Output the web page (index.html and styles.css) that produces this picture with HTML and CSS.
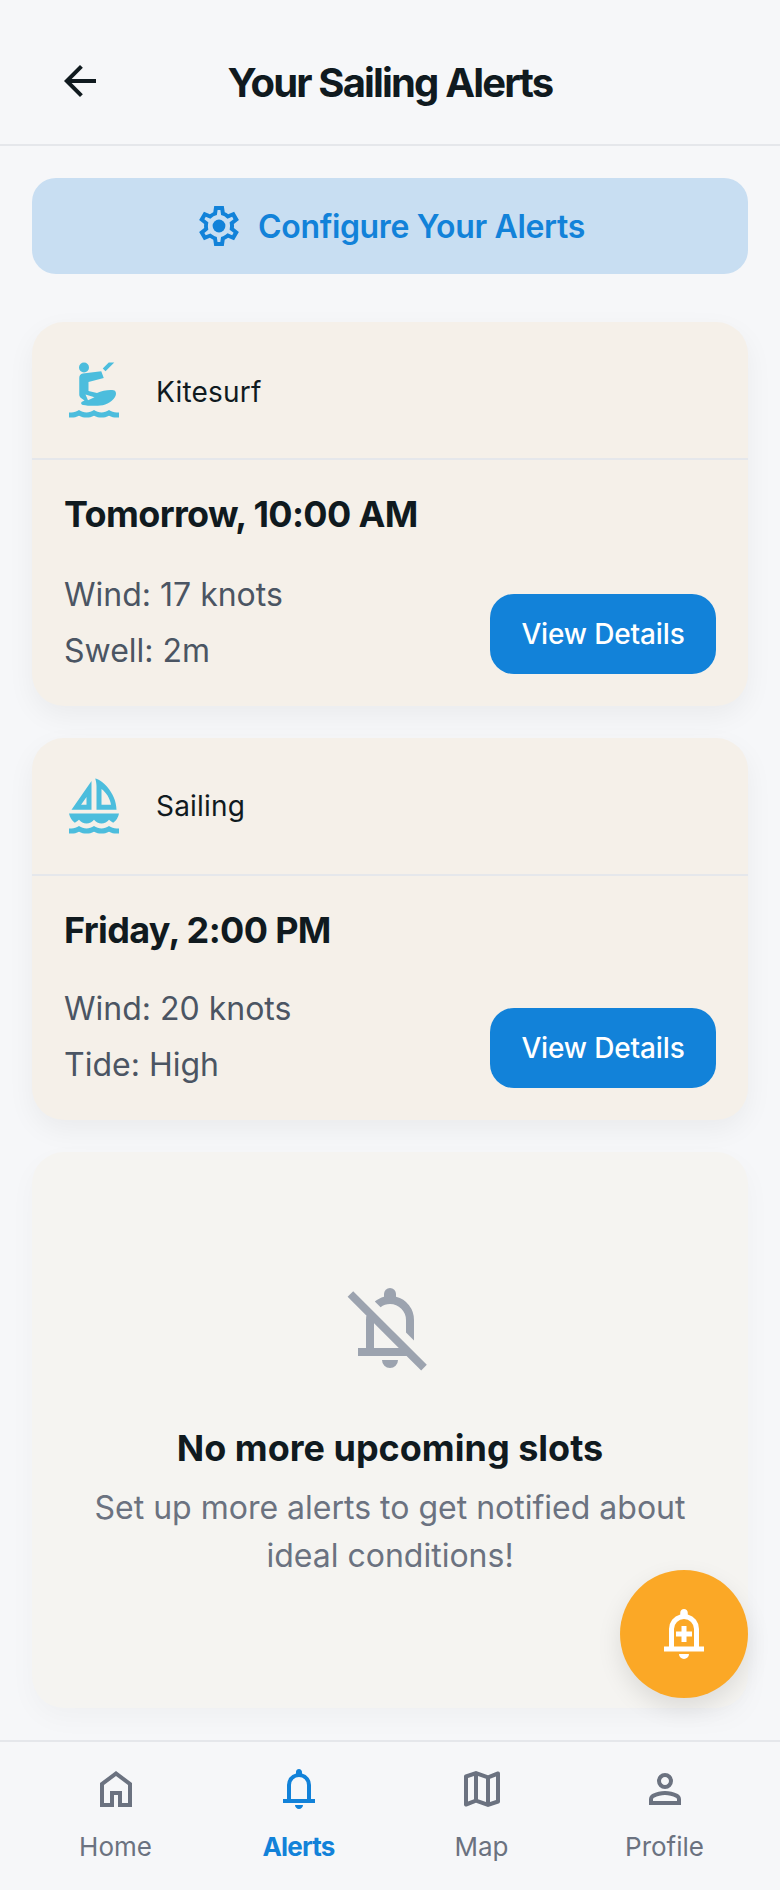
FILE: index.html
```html
<!DOCTYPE html>
<html lang="en">
<head>
<meta charset="utf-8">
<title>Your Sailing Alerts</title>
<link rel="stylesheet" href="styles.css">
</head>
<body>
<div class="app">
  <header class="topbar">
    <button class="back" aria-label="Back">
      <svg class="icon48" viewBox="0 0 24 24"><path d="m7.825 13 5.6 5.6L12 20l-8-8 8-8 1.425 1.4-5.6 5.6H20v2H7.825z"/></svg>
    </button>
    <h1 class="title">Your Sailing Alerts</h1>
    <span class="spacer"></span>
  </header>

  <main class="content">
    <a class="configure">
      <svg class="icon48" viewBox="0 0 24 24"><path fill-rule="evenodd" d="M19.43 12.98c.04-.32.07-.64.07-.98s-.03-.66-.07-.98l2.53-1.98-2.4-4.15-2.98 1.2c-.52-.4-1.08-.73-1.69-.98L14.4 2H9.6l-.46 3.11c-.61.25-1.17.59-1.69.98l-2.98-1.2-2.4 4.15 2.53 1.98c-.04.32-.07.65-.07.98s.03.66.07.98l-2.53 1.98 2.4 4.15 2.98-1.2c.52.4 1.08.73 1.69.98L9.6 22h4.8l.46-3.11c.61-.25 1.17-.59 1.69-.98l2.98 1.2 2.4-4.15-2.5-1.98zM17.45 11.27c.04.31.05.52.05.73s-.02.43-.05.73l-.14 1.13 1.97 1.54-.7 1.21-2.31-.93-.94.71c-.43.32-.84.56-1.25.73l-1.06.43-.36 2.48h-1.4l-.35-2.48-1.06-.43c-.43-.18-.83-.41-1.23-.71l-.91-.7-2.33.94-.7-1.21 1.97-1.54-.14-1.13c-.03-.31-.05-.54-.05-.74s.02-.43.05-.73l.14-1.13-1.97-1.54.7-1.21 2.31.93.94-.71c.43-.32.84-.56 1.25-.73l1.06-.43.36-2.48h1.39l.35 2.48 1.06.43c.43.18.83.41 1.23.71l.91.7 2.33-.94.7 1.21-1.96 1.55.14 1.13z"/><circle cx="12" cy="12" r="3.2"/></svg>
      <span>Configure Your Alerts</span>
    </a>

    <section class="card card-first">
      <div class="card-head">
        <svg class="icon60" viewBox="0 0 24 24"><circle cx="8" cy="3" r="2"/><path d="M17.9 1h2.2l-3.5 3.500-1.100-1.100z"/><path d="M22 23v-2h-1c-1 0-2.100-.35-3-1-1.800 1.300-4.200 1.300-6 0-1.800 1.300-4.200 1.300-6 0-.9.65-2 1-3 1H2v2h1c1 0 2-.25 3-.75 1.900 1 4.100 1 6 0 1.900 1 4.100 1 6 0 1 .5 2 .75 3 .75z"/><path fill-rule="evenodd" d="M7.500 5.400 14.900 4.500 15.900 7.200 9.800 8.800V12.400L13.200 13.200C15 12.200 17.500 11.900 19.300 12 20.800 12 21.200 13.400 20.400 14.800 19 17 16.200 18.300 13.500 18.300 11.200 18.400 9.200 18.300 7.600 18 6.600 17.800 6.700 16.900 7.400 16.600L8.200 16.200 6.800 15.200C6.300 14.800 6.100 14.300 6.100 13.800V7.200C6.100 6.200 6.600 5.500 7.500 5.400ZM8.600 13.800 12.200 14.900 9.600 16.100Z"/></svg>
        <span class="sport">Kitesurf</span>
      </div>
      <div class="card-body">
        <h2 class="when">Tomorrow, 10:00 AM</h2>
        <div class="card-row">
          <div class="facts">
            <p>Wind: 17 knots</p>
            <p>Swell: 2m</p>
          </div>
          <button class="details">View Details</button>
        </div>
      </div>
    </section>

    <section class="card">
      <div class="card-head">
        <svg class="icon60" viewBox="0 0 24 24"><path fill-rule="evenodd" d="M11 13.500V2L3 13.500h8zm-2-2H6.830L9 8.400v3.100zM21 13.500C21 6.500 14.500 1 12.500 1c0 0 .5 1.500.5 3v9.500h8zm-2.200-2H15V5.200c1.800 1.300 3.400 3.600 3.800 6.300z"/><path d="M22 15H2c.31 1.530 1.160 2.840 2.330 3.730.65-.37 1.220-.8 1.670-1.230.73.84 1.800 1.500 3 1.500s2.270-.66 3-1.500c.73.84 1.800 1.500 3 1.500s2.270-.66 3-1.500c.45.43 1.020.86 1.670 1.230A6 6 0 0 0 22 15z"/><path d="M22 23v-2h-1c-1.040 0-2.080-.35-3-1-1.830 1.300-4.170 1.300-6 0-1.830 1.300-4.170 1.300-6 0-.91.65-1.960 1-3 1H2v2h1c1.030 0 2.050-.25 3-.75 1.890 1 4.110 1 6 0 1.890 1 4.110 1 6 0 .95.5 1.970.75 3 .75z"/></svg>
        <span class="sport">Sailing</span>
      </div>
      <div class="card-body">
        <h2 class="when">Friday, 2:00 PM</h2>
        <div class="card-row">
          <div class="facts">
            <p>Wind: 20 knots</p>
            <p>Tide: High</p>
          </div>
          <button class="details">View Details</button>
        </div>
      </div>
    </section>

    <section class="empty">
      <svg class="icon96" viewBox="0 0 24 24"><path d="M4 19v-2h2v-7q0-.825.213-1.625t.637-1.525L8.350 8.350q-.175.4-.262.813T8 10v7h6.200L1.400 4.200l1.400-1.400 18.400 18.400-1.400 1.400-3.650-3.600H4zm14-3.850-2-2V10q0-1.650-1.175-2.825T12 6q-.65 0-1.250.2t-1.100.6L8.200 5.350q.5-.4 1.088-.687T10.500 4.200v-.7q0-.625.438-1.063T12 2q.625 0 1.063.438T13.500 3.500v.7q2 .5 3.250 2.113T18 10v5.150zM12 22q-.825 0-1.413-.587T10 20h4q0 .825-.587 1.413T12 22z"/></svg>
      <h2 class="empty-title">No more upcoming slots</h2>
      <p class="empty-text">Set up more alerts to get notified about ideal conditions!</p>
    </section>
  </main>

  <button class="fab" aria-label="Add alert">
    <svg class="icon60" viewBox="0 0 24 24"><path fill-rule="evenodd" d="M4 19v-2h2v-7q0-2.075 1.250-3.688T10.500 4.200v-.7q0-.625.438-1.063T12 2q.625 0 1.063.438T13.500 3.500v.7q2 .5 3.250 2.113T18 10v7h2v2H4zm4-2h8v-7q0-1.650-1.175-2.825T12 6 9.175 7.175 8 10v7zM12 22q-.825 0-1.413-.588T10 20h4q0 .825-.588 1.413T12 22z"/><path d="M11 8.800h2V11h2.200v2H13v2.200h-2V13H8.800v-2H11z"/></svg>
  </button>

  <nav class="tabs">
    <a class="tab">
      <svg class="icon48" viewBox="0 0 24 24"><path d="M6 19h3v-6h6v6h3v-9l-6-4.500L6 10v9zm-2 2V9l8-6 8 6v12h-7v-6h-2v6H4z"/></svg>
      <span>Home</span>
    </a>
    <a class="tab tab-active">
      <svg class="icon48" viewBox="0 0 24 24"><path fill-rule="evenodd" d="M4 19v-2h2v-7q0-2.075 1.250-3.688T10.500 4.200v-.7q0-.625.438-1.063T12 2q.625 0 1.063.438T13.500 3.500v.7q2 .5 3.250 2.113T18 10v7h2v2H4zm4-2h8v-7q0-1.650-1.175-2.825T12 6 9.175 7.175 8 10v7zM12 22q-.825 0-1.413-.588T10 20h4q0 .825-.588 1.413T12 22z"/></svg>
      <span>Alerts</span>
    </a>
    <a class="tab">
      <svg class="icon48" viewBox="0 0 24 24"><path fill-rule="evenodd" d="m15 21-6-2.100-4.650 1.800q-.5.2-.925-.113T3 19.750v-14q0-.325.188-.575T3.700 4.800L9 3l6 2.100 4.650-1.800q.5-.2.925.113T21 4.250v14q0 .325-.188.575T20.300 19.200L15 21zm-1-2.450V6.850l-4-1.400v11.700l4 1.400zm2 0 3-1V5.700l-3 1.150v11.700zM5 18.300l3-1.150V5.450l-3 1V18.300z"/></svg>
      <span>Map</span>
    </a>
    <a class="tab">
      <svg class="icon48" viewBox="0 0 24 24"><path fill-rule="evenodd" d="M12 12q-1.650 0-2.825-1.175T8 8t1.175-2.825T12 4t2.825 1.175T16 8t-1.175 2.825T12 12zm-8 8v-2.800q0-.85.438-1.562T5.600 14.550q1.550-.775 3.150-1.163T12 13t3.250.387 3.150 1.163q.725.375 1.163 1.088T20 17.200V20H4zm2-2h12v-.8q0-.275-.138-.5t-.362-.35q-1.350-.675-2.725-1.012T12 15t-2.775.338-2.725 1.012q-.225.125-.362.35T6 17.200v.8zm6-8q.825 0 1.413-.588T14 8t-.588-1.413T12 6t-1.412.587T10 8t.588 1.413T12 10z"/></svg>
      <span>Profile</span>
    </a>
  </nav>
</div>
</body>
</html>
```
FILE: styles.css
```css
* { box-sizing: border-box; }
html, body { margin: 0; padding: 0; }
body {
  width: 780px;
  height: 1890px;
  background: #f6f7f9;
  color: #101a1f;
  font-family: "Inter", "Noto Sans", sans-serif;
}
h1, h2, p { margin: 0; }
button { border: 0; padding: 0; font: inherit; }
svg { display: block; fill: currentColor; flex: none; }
.icon48 { width: 48px; height: 48px; }
.icon60 { width: 60px; height: 60px; }
.icon96 { width: 96px; height: 96px; }

.app {
  position: relative;
  display: flex;
  flex-direction: column;
  height: 1890px;
}

.topbar {
  display: grid;
  grid-template-columns: 1fr auto 1fr;
  align-items: center;
  height: 146px;
  padding: 55px 56px 41px;
  border-bottom: 2px solid #e5e7eb;
}
.back { background: none; color: #101a1f; width: 48px; height: 48px; }
.title {
  font-size: 40px;
  line-height: 48px;
  font-weight: 700;
  letter-spacing: -1.85px;
  margin-top: 4px;
}

.content {
  flex: 1;
  display: flex;
  flex-direction: column;
  padding: 32px;
}
.configure {
  display: flex;
  align-items: center;
  justify-content: center;
  gap: 15px;
  height: 96px;
  border-radius: 24px;
  background: #c8def2;
  color: #1282d9;
  font-size: 32px;
  font-weight: 600;
  letter-spacing: -0.35px;
  margin-bottom: 48px;
}

.card {
  background: #f5f0e9;
  border-radius: 32px;
  box-shadow: 0 10px 28px rgba(0, 0, 0, 0.05);
  margin-bottom: 32px;
}
.card-head {
  display: flex;
  align-items: center;
  gap: 32px;
  height: 138px;
  padding: 0 32px;
  border-bottom: 2px solid #e5e7eb;
  color: #4cbddd;
}
.sport { color: #101a1f; font-size: 28px; letter-spacing: 0.2px; }
.card-first .sport { margin-top: 3px; }
.card-body { padding: 32px 32px 31px; }
.when {
  font-size: 36px;
  line-height: 44px;
  font-weight: 700;
  letter-spacing: -0.65px;
  margin-bottom: 33px;
}
.card-first .when { margin-bottom: 34.6px; }
.card-row {
  display: flex;
  justify-content: space-between;
  align-items: flex-end;
}
.facts {
  display: flex;
  flex-direction: column;
  gap: 8px;
  color: #4b5563;
  font-size: 32px;
  line-height: 48px;
}
.details {
  width: 226px;
  height: 80px;
  margin-bottom: 1px;
  border-radius: 24px;
  background: #1282d9;
  color: #fff;
  font-size: 28px;
  font-weight: 500;
  letter-spacing: -0.15px;
}

.empty {
  flex: 1;
  display: flex;
  flex-direction: column;
  align-items: center;
  background: #f5f4f1;
  border-radius: 32px;
  box-shadow: 0 10px 28px rgba(0, 0, 0, 0.03);
  padding: 128px 32px 0;
  color: #9ca3af;
  text-align: center;
}
.empty-title {
  color: #101a1f;
  font-size: 36px;
  line-height: 48px;
  font-weight: 700;
  letter-spacing: 0;
  margin-top: 48px;
}
.empty-text {
  color: #6b7280;
  font-size: 32px;
  line-height: 48px;
  margin-top: 12px;
  width: 640px;
}

.fab {
  position: absolute;
  left: 620px;
  top: 1570px;
  width: 128px;
  height: 128px;
  border-radius: 50%;
  display: flex;
  align-items: center;
  justify-content: center;
  background: #fba826;
  color: #fff;
  box-shadow: 0 10px 24px rgba(0, 0, 0, 0.1);
}

.tabs {
  display: grid;
  grid-template-columns: repeat(4, 1fr);
  height: 150px;
  padding: 23px 24px 0;
  border-top: 2px solid #e5e7eb;
}
.tab {
  display: flex;
  flex-direction: column;
  align-items: center;
  gap: 16px;
  color: #6b7280;
  font-size: 26px;
  line-height: 36px;
}
.tab-active { color: #1282d9; font-weight: 700; letter-spacing: -0.8px; }
```
